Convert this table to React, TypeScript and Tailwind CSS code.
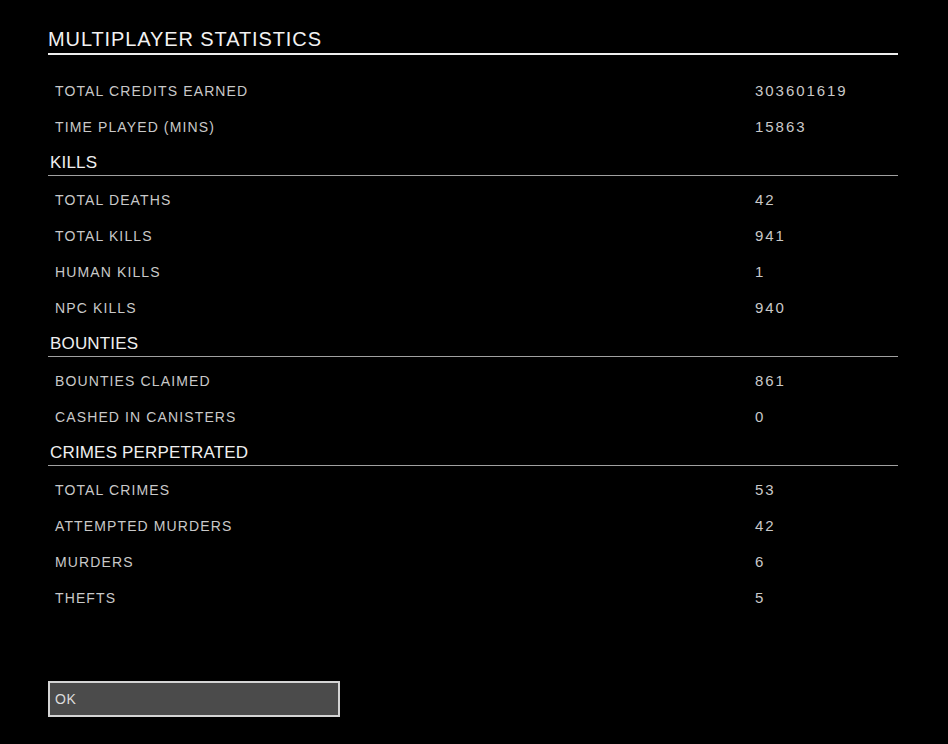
const SECTIONS: { title?: string; rows: [string, string][] }[] = [
	{
		rows: [
			["TOTAL CREDITS EARNED", "303601619"],
			["TIME PLAYED (MINS)", "15863"],
		],
	},
	{
		title: "KILLS",
		rows: [
			["TOTAL DEATHS", "42"],
			["TOTAL KILLS", "941"],
			["HUMAN KILLS", "1"],
			["NPC KILLS", "940"],
		],
	},
	{
		title: "BOUNTIES",
		rows: [
			["BOUNTIES CLAIMED", "861"],
			["CASHED IN CANISTERS", "0"],
		],
	},
	{
		title: "CRIMES PERPETRATED",
		rows: [
			["TOTAL CRIMES", "53"],
			["ATTEMPTED MURDERS", "42"],
			["MURDERS", "6"],
			["THEFTS", "5"],
		],
	},
];

function StatRow({ label, value }: { label: string; value: string }) {
	return (
		<div className="flex h-[36px] items-center text-[#c9c9c9]">
			<span className="w-[707px] shrink-0 pl-[7px] text-[14px] tracking-[0.08em]">{label}</span>
			<span className="text-[15px] tracking-[0.13em]">{value}</span>
		</div>
	);
}

export default function App() {
	return (
		<div
			className="h-[744px] w-[948px] bg-black px-[48px] pt-[28px]"
			style={{ fontFamily: '"Liberation Sans", Arial, sans-serif' }}
		>
			<div className="w-[850px]">
				<h1 className="border-b-2 border-[#eeeeee] pb-[3px] text-[20px] leading-[22px] tracking-[0.045em] text-[#f2f2f2]">
					MULTIPLAYER STATISTICS
				</h1>
				<div className="mt-[18px]">
					{SECTIONS.map((section, i) => (
						<div key={i}>
							{section.title && (
								<div className="mb-[6px] flex h-[31px] items-center border-b border-[#a0a0a0] pl-[2px] pt-[6px] text-[17px] tracking-[0.01em] text-[#efefef]">
									{section.title}
								</div>
							)}
							{section.rows.map(([label, value]) => (
								<StatRow key={label} label={label} value={value} />
							))}
						</div>
					))}
				</div>
				<button className="mt-[65px] flex h-[36px] w-[292px] items-center border-2 border-[#d4d4d4] bg-[#4b4b4b] pl-[5px] text-[14px] tracking-[0.05em] text-[#dcdcdc]">
					OK
				</button>
			</div>
		</div>
	);
}
